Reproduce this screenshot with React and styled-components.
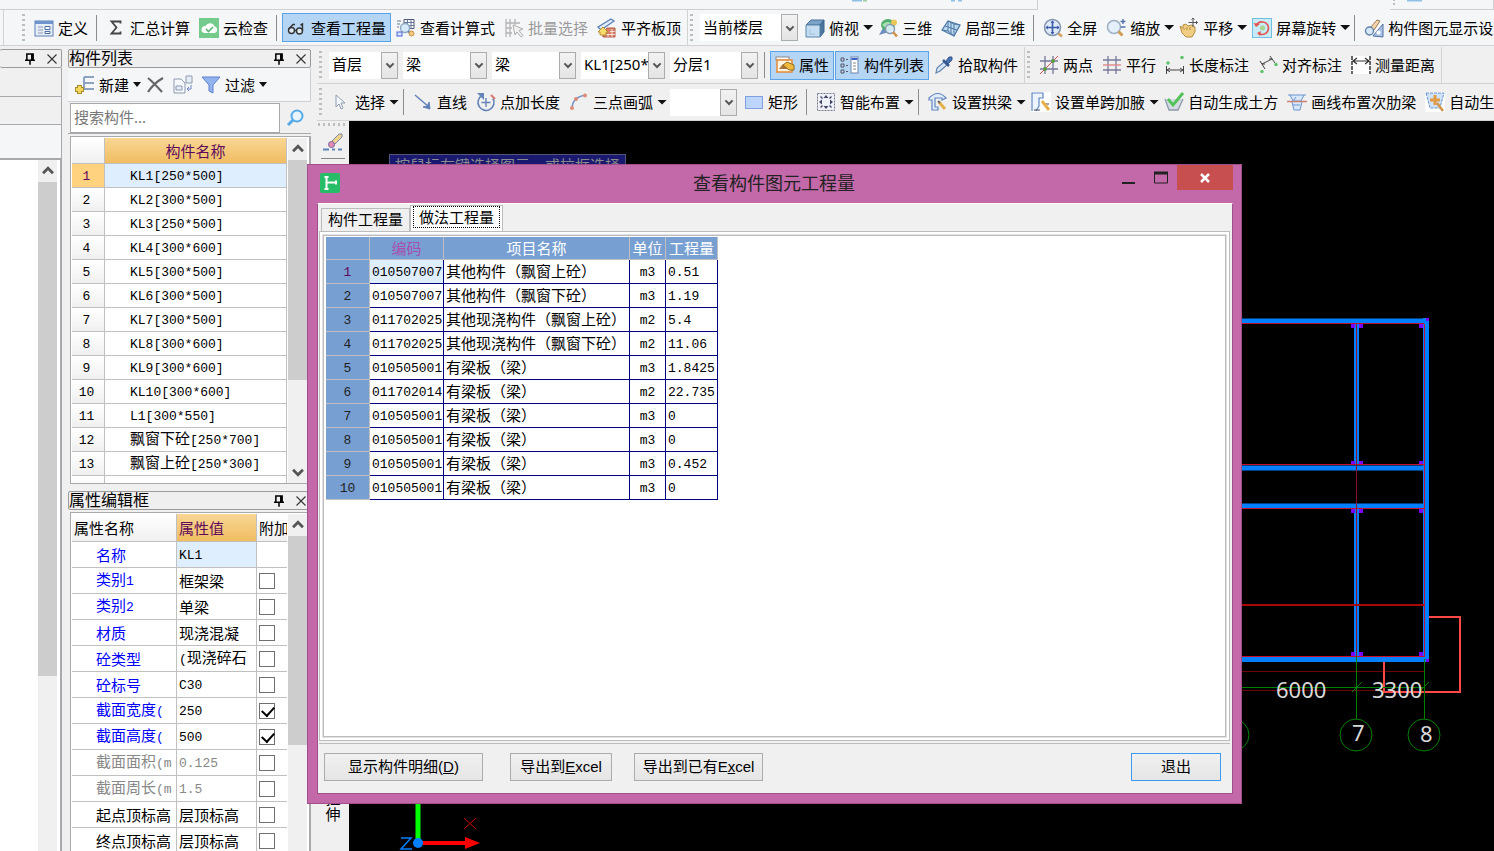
import React from 'react'
import styled, { createGlobalStyle, css } from 'styled-components'

const GlobalStyle = createGlobalStyle`
  *{
    box-sizing: border-box;
  }

  body{
    margin: 0;
    background: #f0f0f0;
    color: #000;
    font-family: "Noto Sans", "Noto Sans CJK SC", sans-serif;
    font-size: 15px;
    line-height: 20px;
  }

  button, input, select{
    font: inherit;
    color: inherit;
    margin: 0;
  }
`

const Page = styled.div`
  position: relative;
  display: flex;
  flex-direction: column;
  height: 100vh;
  overflow: hidden;
`

/* ---------- toolbars ---------- */

const TopStrip = styled.div`
  flex: none;
  display: flex;
  justify-content: space-between;
  height: 10px;
  background: #f5f6f8;
`

const StripPart = styled.div`
  width: ${p => p.$width};
  border-bottom: 1px solid #cfcfcf;
  border-right: 1px solid #cfcfcf;
`

const ToolRow = styled.div`
  flex: none;
  display: flex;
  height: ${p => (p.$light ? '36px' : '37px')};
  overflow: hidden;
  background: ${p => (p.$light ? '#f5f6f8' : '#f0f0f0')};
  border-bottom: 1px solid #d2d2d2;
`

const ToolGroup = styled.div`
  flex: none;
  display: flex;
  align-items: center;
  gap: 1px;
  padding: 0 2px;
  border-right: 1px solid #d2d2d2;
  margin-left: ${p => (p.$first ? '16px' : '0')};
`

const RowEdge = styled.div`
  flex: none;
  width: 4px;
  border-right: 1px solid #d2d2d2;
`

const Grip = styled.span`
  flex: none;
  width: 3px;
  height: 28px;
  margin-right: 4px;
  background: repeating-linear-gradient(#bdbdbd 0 2px, transparent 2px 5px);
`

const Separator = styled.span`
  flex: none;
  width: 2px;
  height: 26px;
  margin: 0 3px;
  border-left: 1px solid #8c8c8c;
`

const ToolButton = styled.button`
  flex: none;
  display: flex;
  align-items: center;
  gap: 4px;
  height: 29px;
  padding: 0 3px;
  border: 1px solid transparent;
  background: none;
  white-space: nowrap;
  color: ${p => (p.disabled ? '#9a9a9a' : '#000')};

  ${p => p.$arrow && css`
    padding-right: 0;
    border-right: 0;
  `}

  ${p => p.$active && css`
    padding: 0 4px;
    background: #b5d5f5;
    border-color: #5ba3e8;
  `}
`

const Caret = styled.span`
  width: ${p => (p.$small ? '8px' : '10px')};
  height: 5px;
  background: #111;
  clip-path: polygon(0 0, 100% 0, 50% 100%);
`

const ComboBox = styled.span`
  flex: none;
  position: relative;
  display: flex;
  width: ${p => p.$width}px;
  height: 27px;
  margin: 0 2px;

  select{
    appearance: none;
    width: 100%;
    border: 0;
    border-radius: 0;
    padding: 0 16px 2px 3px;
    background: #fff;
    overflow: hidden;
  }

  span{
    position: absolute;
    right: 0;
    top: 0;
    bottom: 0;
    width: 17px;
    display: flex;
    align-items: center;
    justify-content: center;
    border: 1px solid #acacac;
    background: linear-gradient(#f2f2f2, #e4e4e4);
    pointer-events: none;
  }
`

const Svg = styled.svg`
  flex: none;
  display: block;
`

const ICONS = {
  define: <><rect x="1" y="3" width="18" height="15" fill="#e8eef8" stroke="#5d7fb5" /><path d="M1 4.500h18" stroke="#6f93cb" strokeWidth="3" /><path d="M4 9h5M4 12h5M4 15h5" stroke="#8a9ab5" /><path d="M11 8.500h5v3h-5zM11 13.500h5v2h-5z" fill="#fff" stroke="#4c6ea5" /></>,
  sigma: <path d="M14.500 5.500V3.500H5.500L10.500 9.500L5.500 15.500H14.500V13.500" fill="none" stroke="#444" strokeWidth="1.800" />,
  cloud: <><rect width="20" height="20" y="0" fill="#74cb8b" /><path d="M5 15h10a3.300 3.300 0 0 0 .6-6.500A5 5 0 0 0 6.500 8A3.600 3.600 0 0 0 5 15z" fill="#fff" /><path d="M7 11l2.500 2.500L14 9" fill="none" stroke="#58b873" strokeWidth="1.600" /></>,
  glasses: <><circle cx="4.500" cy="12.500" r="3" fill="#dfe9f5" stroke="#333" strokeWidth="1.400" /><circle cx="12.500" cy="13" r="3" fill="#dfe9f5" stroke="#333" strokeWidth="1.400" /><path d="M1.800 11L6 6.500H8M7.500 12.500h2M15.500 13V6l-2 1" fill="none" stroke="#333" strokeWidth="1.400" /></>,
  formula: <><path d="M8 1.500h10v9H8z" fill="#fff" stroke="#557" /><path d="M8 4.500h10M8 7.500h10M11.500 1.500v9M15 1.500v9M1 3h4M1 6h3M1 9h2" stroke="#667a99" /><circle cx="9" cy="10" r="4.500" fill="#d7eafa" stroke="#8ea9c4" strokeWidth="1.400" /><rect x="1" y="14" width="5" height="4" fill="#dbe4ff" stroke="#4665d6" /><path d="M12 13l3 3" stroke="#5b84b0" strokeWidth="2" /><circle cx="15.500" cy="15.500" r="2.500" fill="#f6c983" stroke="#c9904a" /></>,
  batch: <><path d="M2 1v18M6 1v18M11 1v6M2 5h14M2 10h6M2 15h6" stroke="#b4b4b4" strokeWidth="1.300" fill="none" /><path d="M9 7l10 4-4 1.500 4 5-2 1.500-4-5-2 3z" fill="#f2f2f2" stroke="#b0b0b0" /></>,
  slab: <><path d="M1 9L14 1l3 2L4 12z" fill="#e4ecf8" stroke="#5d7fb5" strokeWidth="1.300" /><path d="M10 10h8v9H6v-4z" fill="#d98168" stroke="#b55a48" /><path d="M8 16.500h10M13 13.500h5M11 16v3M15 11v8" stroke="#fff" strokeWidth=".7" /><path d="M1 14l5-5 5 5H9v3H3v-3z" fill="#f6dc6d" stroke="#b8902f" /></>,
  cube: <><path d="M1 7l5-5h13l-4 5z" fill="#7ba3c8" stroke="#4a719a" /><path d="M15 7l4-5v12l-4 5z" fill="#4c779f" stroke="#3d648c" /><path d="M1 7h14v12H1z" fill="#c4ddf0" stroke="#5b84ab" /><path d="M5 11v5M4 16h6" stroke="#9ec4e0" /></>,
  orbit: <><path d="M1 17l5-9 5 6z" fill="#6f8fc2" /><ellipse cx="10" cy="7" rx="7" ry="6" fill="#4fae6b" /><path d="M4 7q4-5 9-2l-4 6z" fill="#a5dfb2" /><circle cx="16" cy="4.500" r="3" fill="#ecc65a" /><circle cx="12" cy="11" r="4.500" fill="#dff0fb" fillOpacity=".9" stroke="#8299b3" strokeWidth="1.400" /><path d="M15 14l4 4.500" stroke="#d3924e" strokeWidth="2.600" /></>,
  part3d: <><path d="M1 12l6-9 12 4-6 11z" fill="#bcd9ee" stroke="#4f7ba6" strokeWidth="1.300" /><path d="M4 8l12 4M7 3v10l6 5V6L7 3M10 4.500v11M1 12l6 1M19 7l-6-1" stroke="#4f7ba6" fill="none" /></>,
  full: <><circle cx="9.500" cy="9.500" r="8" fill="#dfeaf8" stroke="#8091ad" strokeWidth="1.500" /><path d="M9.500 3v13M3 9.500h13" stroke="#3c5ba9" strokeWidth="1.600" /><path d="M9.500 2.500l2 2.500h-4zM9.500 16.500l2-2.500h-4zM2.500 9.500L5 7.500v4zM16.500 9.500L14 7.500v4z" fill="#3c5ba9" /><path d="M15.500 15.500l3.500 3" stroke="#d3a15b" strokeWidth="2.600" /></>,
  zoom: <><circle cx="8" cy="9" r="6.500" fill="#e4f0fb" stroke="#9eb0c4" strokeWidth="1.500" /><path d="M12.500 13.500l4 4" stroke="#d39a52" strokeWidth="3" /><path d="M17 1v5M14.500 3.500h5M14.500 9h5" stroke="#5472ab" strokeWidth="1.400" fill="none" /></>,
  pan: <><path d="M1 8l3 2V7l3-1 2 2 4-1 3 2 0 5-3 5H7l-4-4z" fill="#f0cd82" stroke="#b68d43" /><path d="M5 10v2M8 9v3M11 9v3" stroke="#b68d43" /><path d="M14 0v9M9.500 4.500h9M12.500 1.500L14 0l1.500 1.500M17 3l1.500 1.500L17 6" stroke="#555" fill="none" /></>,
  rotate: <><rect x=".5" y=".5" width="19" height="19" fill="#c9ebf7" stroke="#70bfe0" /><path d="M4 8a6.500 6.500 0 0 1 12.500 2a6.500 6.500 0 0 1-9 6" fill="none" stroke="#e0574f" strokeWidth="1.600" /><path d="M1.500 5l2.500 4 4-3zM9 13l-4 2 3 3z" fill="#e0574f" /><circle cx="10.500" cy="10" r="2.500" fill="#a8d48e" /></>,
  display: <><path d="M6 10L13 2l3 1-6 9z" fill="#f5d6ab" stroke="#99785a" /><circle cx="5.500" cy="13" r="4" fill="#d9e8f7" stroke="#6483ab" strokeWidth="1.400" /><path d="M9 18L19 6v13z" fill="#a9c4e7" stroke="#54719f" /><circle cx="14.500" cy="14.500" r="2" fill="#fff" /></>,
  attribute: <><rect x="1" y="2" width="13" height="3" fill="#fff" stroke="#888" /><rect x="2" y="5" width="15" height="12" fill="#fff4e0" stroke="#e58a35" strokeWidth="1.500" /><path d="M4 14l4-5 5 5z" fill="#a8763c" /><path d="M8 10l4-3 7 3v5l-5 0z" fill="#f0ba3d" stroke="#8d6a24" /></>,
  list: <><path d="M1 3h3v3H1zM1 9h3v3H1zM1 15h3v3H1z" fill="none" stroke="#556" /><path d="M6 4.500h2M6 10.500h2M6 16.500h2" stroke="#556" /><rect x="11" y="2" width="7" height="16" fill="#fff" stroke="#6f85ab" /><path d="M11.500 4h6" stroke="#3d62c9" strokeWidth="2" /><path d="M13 8h3M13 11h3M13 14h3" stroke="#888" /></>,
  dropper: <><path d="M2 18l1-5 7-6 3 3-7 6z" fill="#d6e6f6" stroke="#6283ae" strokeWidth="1.200" /><path d="M9 5l6 6" stroke="#36598f" strokeWidth="2.500" /><path d="M12 6l3-4 3 0 0 3-4 4z" fill="#4672b4" stroke="#36598f" /></>,
  twoPoint: <><path d="M6 1v18M14 1v18M1 6h18M1 14h18" stroke="#77799c" strokeWidth="1.300" /><path d="M1 19L19 1" stroke="#dd5252" /><circle cx="6" cy="14" r="2" fill="#5c9c47" /><circle cx="14" cy="6" r="2" fill="#5c9c47" /></>,
  parallel: <><path d="M6 1v18M14 1v18M1 5h18M1 15h18" stroke="#77799c" strokeWidth="1.300" /><path d="M1 10h18" stroke="#e08f8f" strokeWidth="1.500" /></>,
  length: <><path d="M1.500 11v8M18.500 11v8M2 15h16M5 13l-3 2 3 2M15 13l3 2-3 2" stroke="#444" fill="none" /><circle cx="3" cy="8" r="1.800" fill="#5fc46a" /><circle cx="17" cy="2.500" r="1.800" fill="#5fc46a" /></>,
  align: <><path d="M2 6l5 8M12 1l5 7M4 9l10-5M4 9l3 0M14 4l-3 0" stroke="#444" fill="none" /><circle cx="4" cy="16.500" r="1.700" fill="#5fc46a" /><circle cx="18" cy="9.500" r="1.700" fill="#5fc46a" /></>,
  measure: <><rect y="1" width="20" height="18" fill="#fff" /><path d="M1 1v18M19 1v18" stroke="#333" strokeWidth="1.500" strokeDasharray="4 1" /><path d="M2 6h16M6 3L2 6l4 3M14 3l4 3-4 3" stroke="#333" fill="none" strokeWidth="1.200" /></>,
  pointer: <path d="M5 3v12l3-3 2 5 2-1-2-5h4z" fill="#f4f7fb" stroke="#8f9db5" />,
  line: <><path d="M2 3l14 12" stroke="#5f7fb8" strokeWidth="1.400" /><path d="M17 17l-1-7-1.500 4L10 15z" fill="#5f7fb8" stroke="#5f7fb8" /></>,
  addLength: <><path d="M6 3.500a8 8 0 1 0 11 3" fill="none" stroke="#6483b7" strokeWidth="1.600" /><path d="M1 1h7v7z" fill="#6483b7" /><path d="M10 6v9M5.500 10.500h9" stroke="#6483b7" strokeWidth="1.400" /><path d="M15 3l4 4" stroke="#d5776d" strokeWidth="2" /></>,
  arc: <><path d="M3 17Q3 5 17 3" fill="none" stroke="#6f93cb" strokeWidth="1.500" /><circle cx="3" cy="16" r="2" fill="#e08b76" /><circle cx="7" cy="7" r="2" fill="#e08b76" /><circle cx="16" cy="3.500" r="2" fill="#e08b76" /></>,
  rect: <rect x="1.500" y="4.500" width="17" height="12" fill="#bdd4fb" stroke="#7f9fe0" />,
  smart: <><rect x="1.500" y="1.500" width="17" height="17" fill="#eef2f8" stroke="#778" strokeDasharray="2 1" /><path d="M10 3l2.500 3h-5zM10 17l2.500-3h-5zM3 10l3-2.500v5zM17 10l-3-2.500v5z" fill="#446" /><path d="M4.500 4.500l2 2M15.500 4.500l-2 2M4.500 15.500l2-2M15.500 15.500l-2-2" stroke="#446" strokeWidth="1.300" /></>,
  arch: <><path d="M1 6Q10-3 18 6l-4 2v-2H7v9h3v3H4V8H1z" fill="#e4eefb" stroke="#5f86c0" strokeWidth="1.200" /><path d="M11 10l6 7" stroke="#e6b04a" strokeWidth="3" /><path d="M10 9l2 2" stroke="#666" strokeWidth="2" /></>,
  haunch: <><rect width="20" height="20" fill="#fff" /><path d="M1 19V1h11v5H8v8l-3 5" fill="#eef4fd" stroke="#5f86c0" strokeWidth="1.200" /><path d="M3 18h6M13 12h5" stroke="#445" /><path d="M11 9l7 9" stroke="#e6b04a" strokeWidth="3" /></>,
  earth: <><path d="M1 7l4 11h9l5-11" fill="#d5dae2" stroke="#8c99ab" strokeWidth="1.300" /><path d="M4 7l5 6L19 1" fill="none" stroke="#55c35b" strokeWidth="3" /></>,
  rib: <><path d="M1 3h18M3 3l3 6h8l3-6M5 10l2 8h6l2-8" fill="#d8e8fa" stroke="#6b94cd" /><path d="M0 9.500h20" stroke="#cc8070" strokeWidth="1.500" /><path d="M6 13h7M9 5l-3 4" stroke="#6b94cd" /></>,
  autoRib: <><rect width="20" height="20" fill="#fff" /><path d="M1 1h18l-4 15H5z" fill="#cfe2f8" stroke="#6b94cd" strokeDasharray="3 1" /><path d="M10 3v10M5 8h10" stroke="#e39a45" strokeWidth="3" /><path d="M12 11l6 8" stroke="#d49448" strokeWidth="2.500" /></>,
  create: <><path d="M9 2h10M9 8h10M9 14h10M9 2v12" stroke="#8ca2c0" strokeWidth="2" fill="none" /><path d="M4.500 10v9M0 14.500h9" stroke="#a88a2f" strokeWidth="5" /><path d="M4.500 11v7M1 14.500h7" stroke="#f3d75c" strokeWidth="3" /></>,
  remove: <path d="M3 3Q8 7 17 17M18 3Q9 8 3 17" fill="none" stroke="#666" strokeWidth="2.200" />,
  copy: <><path d="M1 4h7l4 4v10H1z" fill="#f5f8fc" stroke="#8c9ab0" /><path d="M3 11h6v4H3zM13 1h6v7h-6z" fill="#e6edf7" stroke="#8c9ab0" /><path d="M18 10v4h-4M16 12l-2 2 2 2" fill="none" stroke="#6a83c8" /></>,
  filter: <path d="M1 2h18l-7 8v8l-4-2v-6z" fill="#93b4ee" stroke="#5c81cc" />,
  search: <><circle cx="11" cy="8" r="5.500" fill="#e8f5fe" stroke="#55aae8" strokeWidth="2" /><path d="M7 12L2 17" stroke="#55aae8" strokeWidth="3" /></>,
  brush: <><path d="M8 10l8-8 3 0 0 3-8 8z" fill="#f0d48c" stroke="#7a86a5" /><circle cx="8.500" cy="12.500" r="3" fill="#e58cb4" stroke="#75689a" /><path d="M0 17.500h6M9 17.500h3M15 17.500h4" stroke="#5d86b4" strokeWidth="2" /></>,
  chevronDown: <path d="M5.500 8l4.500 4.500L14.500 8" fill="none" stroke="#555" strokeWidth="2.500" />,
  chevronUp: <path d="M5.500 12L10 7.500l4.500 4.500" fill="none" stroke="#555" strokeWidth="2.500" />,
  pin: <path d="M6.500 11V4.500h7V11M12 5v6M4.500 11.500h11M10 12v4.500" fill="none" stroke="#000" strokeWidth="1.700" />,
  close: <path d="M5 5l10 10M15 5L5 15" stroke="#333" strokeWidth="1.200" />,
  app: <><rect width="20" height="20" rx="2" fill="#27bd68" /><path d="M6.500 4v12M7 9.500h9M4.500 4h4M4.500 16h4M16 7.500v4" stroke="#fff" strokeWidth="2" /></>
}

const Icon = ({ name, size = 20 }) => (
  <Svg width={size} height={size} viewBox="0 0 20 20" aria-hidden="true">{ICONS[name]}</Svg>
)

const Tool = ({ icon, label, arrow, ...rest }) => (
  <ToolButton type="button" $arrow={arrow} {...rest}>
    <Icon name={icon} />
    {label}
    {arrow && <Caret />}
  </ToolButton>
)

const Combo = ({ width, value, label }) => (
  <ComboBox $width={width}>
    <select aria-label={label} defaultValue={value}>
      <option>{value}</option>
    </select>
    <span><Icon name="chevronDown" size={16} /></span>
  </ComboBox>
)

/* ---------- docked panels ---------- */

const Body = styled.div`
  flex: 1;
  display: flex;
  min-height: 0;
  padding-top: 1px;
`

const SideColumn = styled.div`
  flex: none;
  display: flex;
  flex-direction: column;
  width: ${p => p.$width}px;
  margin-right: 6px;
  padding-top: 2px;
`

const PanelTitle = styled.header`
  flex: none;
  display: flex;
  align-items: center;
  height: 19px;
  border: 1px solid #9b9b9b;
  border-left-width: ${p => (p.$cut ? '0' : '1px')};
  border-radius: 2px;
  background: #efefef;
  font-size: 16px;
  line-height: 17px;

  h2{
    flex: 1;
    margin: 0;
    font-size: inherit;
    font-weight: normal;
    white-space: nowrap;
  }

  button{
    display: flex;
    padding: 0;
    border: 0;
    background: none;
    margin-left: 4px;
  }
`

const EmptyBar = styled.div`
  flex: none;
  height: ${p => p.$height}px;
  border: 1px solid #a9a9ad;
  border-left: 0;
  border-top: 0;
  background: ${p => (p.$light ? '#f5f6f8' : '#f0f0f0')};
`

const Frame = styled.div`
  flex: 1;
  display: flex;
  min-height: 0;
  overflow: hidden;
  background: #fff;
  border: 1px solid #a9a9ad;
  border-right: 2px solid #a9a9ad;
  border-bottom-width: ${p => (p.$open ? '0' : '1px')};
  border-left-width: ${p => (p.$cut ? '0' : '1px')};
  margin: ${p => (p.$cut ? '0' : '2px 0 0 2px')};
  padding: ${p => (p.$cut ? '0 3px 0 0' : '1px 2px 0 1px')};
`

const FrameContent = styled.div`
  flex: 1;
  min-width: 0;
  margin-right: 1px;
  overflow: hidden;
`

const Scroll = styled.div`
  flex: none;
  display: flex;
  flex-direction: column;
  align-items: center;
  width: 19px;
  background: #f0f0f0;
`

const Thumb = styled.span`
  width: 100%;
  flex: 0 1 ${p => p.$size};
  margin-bottom: auto;
  background: #cdcdcd;
`

const PanelTools = styled.div`
  flex: none;
  display: flex;
  align-items: center;
  height: 34px;
  padding-left: 3px;
  background: #f5f6f8;
  border-bottom: 1px solid #cfcfcf;
  border-right: 1px solid #cfcfcf;
`

const SearchRow = styled.label`
  flex: none;
  display: flex;
  align-items: center;
  gap: 6px;
  height: 32px;
  padding-left: 2px;
  border-bottom: 1px solid #a9a9ad;

  input{
    width: 210px;
    height: 30px;
    padding: 0 3px 2px;
    border: 1px solid #a9a9ad;
    border-radius: 0;
    background: #fff;
  }

  input::placeholder{
    color: #777;
  }
`

const Panel = styled.section`
  display: flex;
  flex-direction: column;
  min-height: 0;
  flex: ${p => p.$flex};
  margin-bottom: ${p => p.$space || 0}px;
`

const Mono = styled.span`
  font-family: "Liberation Mono", monospace;
  font-size: 13px;
`

// Latin runs are set in the fixed-width face, the rest stays in the CJK one
const mixed = text => text.split(/([\x20-\x7e]+)/).map((part, i) => (
  i % 2 ? <Mono key={i}>{part}</Mono> : part
))

const ListTable = styled.table`
  width: 100%;
  table-layout: fixed;
  border-collapse: separate;
  border-spacing: 0;

  th, td{
    height: 24px;
    padding: 0;
    border-right: 1px solid #c0c0c0;
    border-bottom: 1px solid #c0c0c0;
    font-weight: normal;
    white-space: nowrap;
    overflow: hidden;
  }

  thead th{
    height: 26px;
    background: linear-gradient(#fff, #f0f0f0);
  }

  thead th:last-child{
    background: linear-gradient(#f9d694, #f0bd62);
    color: #5d0a5d;
  }

  tbody th{
    background: linear-gradient(#fff, #f0f0f0);
    padding-right: 3px;
  }

  td{
    padding-left: 25px;
  }
`

const ListRow = styled.tr`
  ${p => p.$selected && css`
    && th{
      background: #ffd27f;
      color: #5d0a5d;
    }

    td{
      background: #dfeefe;
    }
  `}
`

const PropTable = styled.table`
  width: 100%;
  table-layout: fixed;
  border-collapse: separate;
  border-spacing: 0;

  th, td{
    height: 26px;
    padding: 0 0 0 2px;
    border-right: 1px solid #c0c0c0;
    border-bottom: 1px solid #c0c0c0;
    font-weight: normal;
    text-align: left;
    white-space: nowrap;
    overflow: hidden;
  }

  th:last-child, td:last-child{
    border-right: 0;
  }

  thead th{
    height: 28px;
    background: linear-gradient(#fff, #f0f0f0);
  }

  thead th:nth-child(2){
    background: linear-gradient(#f9d694, #f0bd62);
    color: #5d0a5d;
  }

  tbody th{
    padding-left: 24px;
  }
`

const PropRow = styled.tr`
  color: ${p => (p.$tone === 'grey' ? '#888' : '#000')};

  th{
    color: ${p => (p.$tone === 'blue' ? '#0000ff' : 'inherit')};
  }

  td:nth-child(2){
    background: ${p => (p.$selected ? '#dfeefe' : '#fff')};
  }
`

const Check = styled.input`
  appearance: none;
  display: block;
  width: 16px;
  height: 16px;
  border: 1px solid #707070;
  background: #fff;

  &:checked::after{
    content: '';
    display: block;
    width: 6px;
    height: 10px;
    margin: 0 0 0 4px;
    border: solid #000;
    border-width: 0 2px 2px 0;
    transform: rotate(42deg);
  }
`

/* ---------- drawing area ---------- */

const Main = styled.main`
  flex: 1;
  min-width: 0;
  display: flex;
  flex-direction: column;
`

const Workspace = styled.div`
  flex: 1;
  display: flex;
  min-height: 0;
`

const ToolStrip = styled.div`
  flex: none;
  display: flex;
  flex-direction: column;
  align-items: center;
  gap: 6px;
  width: 32px;
  padding: 2px 0 29px;

  button{
    padding: 0;
    border: 0;
    background: none;
    width: 20px;
  }

  button:last-child{
    width: 15px;
    margin-top: auto;
    line-height: 16px;
  }
`

const StripGrip = styled.span`
  width: 30px;
  height: 3px;
  background: repeating-linear-gradient(90deg, #bdbdbd 0 2px, transparent 2px 5px);
`

const StripLine = styled.span`
  width: 24px;
  border-top: 1px solid #888;
`

const Canvas = styled.div`
  position: relative;
  flex: 1;
  background: #000;
  overflow: hidden;
`

const Hint = styled.div`
  position: absolute;
  left: 40px;
  top: 33px;
  padding: 0 5px;
  border: 1px solid #55557a;
  background: #191970;
  color: #8b8b8b;
  white-space: nowrap;
`

const Model = () => (
  <Svg width="100%" height="100%" role="img" aria-label="梁平面图">
    <g stroke="#0080ff" strokeWidth="5" fill="none">
      <path d="M600 200H1080M600 347H1074M600 385H1074M600 538.500H1080" />
      <path d="M1007.500 203V344M1007.500 388V536" />
      <path d="M1077 197V541" strokeWidth="6" />
    </g>
    <g fill="#7a00ff">
      {[[1003, 203], [1011, 203], [1071, 203], [1003, 340], [1011, 340], [1071, 340], [1003, 388], [1011, 388], [1071, 388], [1003, 531], [1011, 531], [1071, 531]].map(([x, y]) => (
        <rect key={`${x}-${y}`} x={x - 1} y={y} width="4" height="4" />
      ))}
      <rect x="1077" y="197" width="3" height="3" />
      <rect x="1077" y="538" width="3" height="3" />
    </g>
    <g stroke="#c4102a" fill="none">
      <path d="M600 202.500H1075M600 343.500H1075M600 387.500H1075M600 535.500H1075M1075.500 203V536" />
      <path d="M600 484H1075" stroke="#a80808" strokeWidth="2" />
      <path d="M1007.500 203V536" stroke="#8c1030" />
      <path d="M600 550.500H1075M600 569.500H1035" stroke="#6a0505" />
    </g>
    <path d="M1080 496H1111V571H1035V541" fill="none" stroke="#ff4848" strokeWidth="2" />
    <g stroke="#008000" fill="none">
      <path d="M600 566.500H1076M1007.500 536V598M1075.500 538V598M1003 571L1013 561M1070 571L1080 561" />
      {[884, 1007, 1075].map(x => <circle key={x} cx={x} cy="614" r="16" />)}
    </g>
    <g fill="#d9d9d9" fontSize="22">
      <text x="927" y="577">6000</text>
      <text x="1023" y="577">3300</text>
      <text x="1003" y="620">7</text>
      <text x="1071" y="621">8</text>
    </g>
    <path d="M69 660V722" stroke="#00ff00" strokeWidth="5" />
    <path d="M69 722H118" stroke="#ff0000" strokeWidth="4" />
    <path d="M116 716L131 722L116 728z" fill="#ff0000" />
    <path d="M115 697L127 708M127 697L115 708" stroke="#d00000" />
    <path d="M52 717H62L52 728H63" stroke="#0080ff" strokeWidth="1.500" fill="none" />
    <circle cx="69" cy="722" r="5" fill="#0080ff" />
  </Svg>
)

/* ---------- quantity dialog ---------- */

const Dialog = styled.section`
  position: absolute;
  left: 307px;
  right: 252px;
  top: 164px;
  bottom: 47px;
  display: flex;
  flex-direction: column;
  padding: 0 8px 9px 9px;
  background: #c368a8;
  border: 1px solid #a05088;
`

const DialogTitle = styled.header`
  flex: none;
  display: flex;
  align-items: flex-start;
  height: 38px;
  padding-left: 3px;

  > svg{
    margin-top: 8px;
  }

  h1{
    flex: 1;
    margin: 6px 0 0 95px;
    font-size: 18px;
    font-weight: normal;
    line-height: 24px;
    text-align: center;
    color: #222;
  }
`

const WindowButton = styled.button`
  display: flex;
  align-items: center;
  justify-content: center;
  width: ${p => (p.$close ? '56px' : '32px')};
  height: 25px;
  padding: 0;
  border: 0;
  background: ${p => (p.$close ? '#c84f50' : 'none')};
`

const Client = styled.div`
  flex: 1;
  display: flex;
  flex-direction: column;
  min-height: 0;
  background: #f0f0f0;
  border: 1px solid #a05088;
  border-top-color: #fff;
  padding: 1px 2px 0 1px;
`

const Tabs = styled.div`
  flex: none;
  display: flex;
  align-items: flex-end;
  height: 26px;
  padding-left: 2px;
`

const Tab = styled.button`
  height: ${p => (p.$active ? '27px' : '23px')};
  padding: ${p => (p.$active ? '0 2px 4px' : '0 6px 2px')};
  margin-bottom: ${p => (p.$active ? '-1px' : '0')};
  border: 1px solid #bcbcbc;
  border-bottom: 0;
  background: ${p => (p.$active ? '#fff' : '#f0f0f0')};

  span{
    display: block;
    padding: ${p => (p.$active ? '0 5px' : '0')};
    border: ${p => (p.$active ? '1px dotted #000' : '0')};
  }
`

const TabPage = styled.div`
  flex: 1;
  min-height: 0;
  display: flex;
  padding: 3px;
  background: #fff;
  border: 1px solid #bcbcbc;
`

const Sheet = styled.div`
  flex: 1;
  padding: 1px 2px;
  border: 1px solid #bcbcbc;
  outline: 1px solid #e0e0e6;
  overflow: hidden;
`

const DataTable = styled.table`
  width: 392px;
  table-layout: fixed;
  border-collapse: separate;
  border-spacing: 0;
  line-height: 18px;

  th, td{
    height: 24px;
    padding: 0 0 1px 2px;
    font-weight: normal;
    white-space: nowrap;
    overflow: hidden;
  }

  th{
    padding: 0;
    background: #789fd1;
    color: #fff;
    border-right: 1px solid #c0c0c0;
    border-bottom: 1px solid #c0c0c0;
  }

  thead th{
    height: 23px;
  }

  thead th:nth-child(2){
    color: #a64fb0;
  }

  tbody th{
    color: #222;
  }

  tbody tr:first-child th{
    color: #5d0a5d;
  }

  td{
    border-right: 1px solid #000080;
    border-bottom: 1px solid #000080;
  }

  tbody tr:first-child td:nth-child(2){
    background: #dfeefe;
  }

  td:nth-child(4){
    text-align: center;
    padding: 0 0 1px;
  }
`

const Actions = styled.footer`
  flex: none;
  display: flex;
  align-items: flex-start;
  height: 50px;
  margin-top: 2px;
  padding: 9px 9px 0 5px;
  border-top: 1px solid #bcbcbc;
`

const ActionButton = styled.button`
  width: ${p => p.$width}px;
  height: 28px;
  padding: 0;
  margin-right: ${p => p.$space || 0}px;
  margin-left: ${p => (p.$primary ? 'auto' : '0')};
  border: 1px solid ${p => (p.$primary ? '#3c9bf0' : '#acacac')};
  background: linear-gradient(#f0f0f0, #e5e5e5);
  font-family: "Liberation Sans", "Noto Sans CJK SC", sans-serif;
`

/* ---------- data ---------- */

const components = [
  'KL1[250*500]', 'KL2[300*500]', 'KL3[250*500]', 'KL4[300*600]', 'KL5[300*500]',
  'KL6[300*500]', 'KL7[300*500]', 'KL8[300*600]', 'KL9[300*600]', 'KL10[300*600]',
  'L1[300*550]', '飘窗下砼[250*700]', '飘窗上砼[250*300]'
]

const properties = [
  { name: '名称', value: 'KL1', tone: 'blue' },
  { name: '类别1', value: '框架梁', tone: 'blue', check: false },
  { name: '类别2', value: '单梁', tone: 'blue', check: false },
  { name: '材质', value: '现浇混凝', tone: 'blue', check: false },
  { name: '砼类型', value: '(现浇碎石', tone: 'blue', check: false },
  { name: '砼标号', value: 'C30', tone: 'blue', check: false },
  { name: '截面宽度(', value: '250', tone: 'blue', check: true },
  { name: '截面高度(', value: '500', tone: 'blue', check: true },
  { name: '截面面积(m', value: '0.125', tone: 'grey', check: false },
  { name: '截面周长(m', value: '1.5', tone: 'grey', check: false },
  { name: '起点顶标高', value: '层顶标高', check: false },
  { name: '终点顶标高', value: '层顶标高', check: false }
]

const quantities = [
  ['010507007', '其他构件（飘窗上砼）', 'm3', '0.51'],
  ['010507007', '其他构件（飘窗下砼）', 'm3', '1.19'],
  ['011702025', '其他现浇构件（飘窗上砼）', 'm2', '5.4'],
  ['011702025', '其他现浇构件（飘窗下砼）', 'm2', '11.06'],
  ['010505001', '有梁板（梁）', 'm3', '1.8425'],
  ['011702014', '有梁板（梁）', 'm2', '22.735'],
  ['010505001', '有梁板（梁）', 'm3', '0'],
  ['010505001', '有梁板（梁）', 'm3', '0'],
  ['010505001', '有梁板（梁）', 'm3', '0.452'],
  ['010505001', '有梁板（梁）', 'm3', '0']
]

const TitleButtons = () => (
  <>
    <button type="button" aria-label="固定"><Icon name="pin" size={18} /></button>
    <button type="button" aria-label="关闭"><Icon name="close" size={18} /></button>
  </>
)

const ScrollBar = ({ size, open }) => (
  <Scroll>
    <Icon name="chevronUp" size={22} />
    <Thumb $size={size} />
    {!open && <Icon name="chevronDown" size={22} />}
  </Scroll>
)

const ComponentList = () => (
  <Panel $flex="0 1 435px" $space={7}>
    <PanelTitle><h2>构件列表</h2><TitleButtons /></PanelTitle>
    <PanelTools>
      <ToolButton type="button" $arrow><Icon name="create" />新建<Caret $small /></ToolButton>
      <ToolButton type="button" aria-label="删除"><Icon name="remove" /></ToolButton>
      <ToolButton type="button" aria-label="复制"><Icon name="copy" /></ToolButton>
      <ToolButton type="button" $arrow><Icon name="filter" />过滤<Caret $small /></ToolButton>
    </PanelTools>
    <SearchRow>
      <input type="text" placeholder="搜索构件..." aria-label="搜索构件" />
      <Icon name="search" />
    </SearchRow>
    <Frame>
      <FrameContent>
        <ListTable>
          <colgroup><col width="33" /><col /></colgroup>
          <thead><tr><th /><th>构件名称</th></tr></thead>
          <tbody>
            {components.map((name, i) => (
              <ListRow key={name} $selected={i === 0}>
                <th><Mono>{i + 1}</Mono></th>
                <td>{mixed(name)}</td>
              </ListRow>
            ))}
            <ListRow><th /><td /></ListRow>
          </tbody>
        </ListTable>
      </FrameContent>
      <ScrollBar size="220px" />
    </Frame>
  </Panel>
)

const PropertyEditor = () => (
  <Panel $flex="1">
    <PanelTitle><h2>属性编辑框</h2><TitleButtons /></PanelTitle>
    <Frame $open>
      <FrameContent>
        <PropTable>
          <colgroup><col width="105" /><col width="80" /><col /></colgroup>
          <thead><tr><th>属性名称</th><th>属性值</th><th>附加</th></tr></thead>
          <tbody>
            {properties.map((p, i) => (
              <PropRow key={p.name} $tone={p.tone} $selected={i === 0}>
                <th>{mixed(p.name)}</th>
                <td>{mixed(p.value)}</td>
                <td>
                  {p.check !== undefined && <Check type="checkbox" aria-label={p.name} defaultChecked={p.check} />}
                </td>
              </PropRow>
            ))}
          </tbody>
        </PropTable>
      </FrameContent>
      <ScrollBar size="209px" open />
    </Frame>
  </Panel>
)

const QuantityDialog = () => (
  <Dialog role="dialog" aria-labelledby="dialog-title">
    <DialogTitle>
      <Icon name="app" />
      <h1 id="dialog-title">查看构件图元工程量</h1>
      <WindowButton type="button" aria-label="最小化">
        <Svg width="16" height="16"><path d="M1 13h13" stroke="#222" strokeWidth="2" /></Svg>
      </WindowButton>
      <WindowButton type="button" aria-label="最大化">
        <Svg width="16" height="16"><path d="M1.500 2v11h13V2" fill="none" stroke="#222" /><path d="M1 3h14" stroke="#222" strokeWidth="3" /></Svg>
      </WindowButton>
      <WindowButton type="button" aria-label="关闭" $close>
        <Svg width="12" height="12"><path d="M2 2l8 8M10 2l-8 8" stroke="#fff" strokeWidth="2.500" /></Svg>
      </WindowButton>
    </DialogTitle>
    <Client>
      <Tabs role="tablist">
        <Tab type="button" role="tab"><span>构件工程量</span></Tab>
        <Tab type="button" role="tab" aria-selected="true" $active><span>做法工程量</span></Tab>
      </Tabs>
      <TabPage>
        <Sheet>
          <DataTable>
            <colgroup><col width="44" /><col width="74" /><col width="186" /><col width="36" /><col width="52" /></colgroup>
            <thead>
              <tr><th /><th>编码</th><th>项目名称</th><th>单位</th><th>工程量</th></tr>
            </thead>
            <tbody>
              {quantities.map((row, i) => (
                <tr key={i}>
                  <th><Mono>{i + 1}</Mono></th>
                  {row.map((cell, j) => <td key={j}>{mixed(cell)}</td>)}
                </tr>
              ))}
            </tbody>
          </DataTable>
        </Sheet>
      </TabPage>
      <Actions>
        <ActionButton type="button" $width={159} $space={27}>显示构件明细(<u>D</u>)</ActionButton>
        <ActionButton type="button" $width={102} $space={22}>导出到<u>E</u>xcel</ActionButton>
        <ActionButton type="button" $width={129}>导出到已有E<u>x</u>cel</ActionButton>
        <ActionButton type="button" $width={90} $primary>退出</ActionButton>
      </Actions>
    </Client>
  </Dialog>
)

const App = () => (
  <Page>
    <GlobalStyle />
    <TopStrip>
      <StripPart $width="1038px">
        <Svg width="100%" height="3" aria-hidden="true"><path d="M852 0h10M951 0h4M958 0h4" stroke="#8fc0e6" strokeWidth="3" /><path d="M863 0h4" stroke="#9fcf9f" strokeWidth="3" /></Svg>
      </StripPart>
      <StripPart $width="104px">
        <Svg width="100%" height="6" aria-hidden="true"><path d="M3 0h2M3 4h2" stroke="#bdbdbd" strokeWidth="2" /><path d="M17 0h15" stroke="#8fc0e6" strokeWidth="3" /></Svg>
      </StripPart>
    </TopStrip>
    <ToolRow $light>
      <RowEdge />
      <ToolGroup $first>
        <Grip />
        <Tool icon="define" label="定义" />
        <Separator />
        <Tool icon="sigma" label="汇总计算" />
        <Tool icon="cloud" label="云检查" />
        <Separator />
        <Tool icon="glasses" label="查看工程量" $active />
        <Tool icon="formula" label="查看计算式" />
        <Tool icon="batch" label="批量选择" disabled />
        <Tool icon="slab" label="平齐板顶" />
      </ToolGroup>
      <ToolGroup>
        <Grip />
        <Combo width={98} value="当前楼层" label="楼层范围" />
        <Tool icon="cube" label="俯视" arrow />
        <Tool icon="orbit" label="三维" />
        <Tool icon="part3d" label="局部三维" />
        <Separator />
        <Tool icon="full" label="全屏" />
        <Tool icon="zoom" label="缩放" arrow />
        <Tool icon="pan" label="平移" arrow />
        <Tool icon="rotate" label="屏幕旋转" arrow />
        <Separator />
        <Tool icon="display" label="构件图元显示设置" />
      </ToolGroup>
    </ToolRow>
    <Body>
      <SideColumn $width={62}>
        <PanelTitle $cut><h2> </h2><TitleButtons /></PanelTitle>
        <EmptyBar $height={29} />
        <EmptyBar $height={28} />
        <EmptyBar $height={34} $light />
        <Frame $cut $open>
          <FrameContent />
          <ScrollBar size="494px" open />
        </Frame>
      </SideColumn>
      <SideColumn $width={243}>
        <ComponentList />
        <PropertyEditor />
      </SideColumn>
      <Main>
        <ToolRow>
          <ToolGroup>
            <Grip />
            <Combo width={69} value="首层" label="楼层" />
            <Combo width={84} value="梁" label="构件类别" />
            <Combo width={84} value="梁" label="构件类型" />
            <Combo width={84} value="KL1[250*" label="构件" />
            <Combo width={88} value="分层1" label="分层" />
            <Separator />
            <Tool icon="attribute" label="属性" $active />
            <Tool icon="list" label="构件列表" $active />
            <Tool icon="dropper" label="拾取构件" />
          </ToolGroup>
          <ToolGroup>
            <Grip />
            <Tool icon="twoPoint" label="两点" />
            <Tool icon="parallel" label="平行" />
            <Tool icon="length" label="长度标注" />
            <Tool icon="align" label="对齐标注" />
            <Tool icon="measure" label="测量距离" />
          </ToolGroup>
        </ToolRow>
        <ToolRow>
          <ToolGroup>
            <Grip />
            <Tool icon="pointer" label="选择" arrow />
            <Separator />
            <Tool icon="line" label="直线" />
            <Tool icon="addLength" label="点加长度" />
            <Tool icon="arc" label="三点画弧" arrow />
            <Combo width={67} value="" label="画弧方式" />
            <Tool icon="rect" label="矩形" />
            <Separator />
            <Tool icon="smart" label="智能布置" arrow />
            <Separator />
            <Tool icon="arch" label="设置拱梁" arrow />
            <Tool icon="haunch" label="设置单跨加腋" arrow />
            <Tool icon="earth" label="自动生成土方" />
            <Tool icon="rib" label="画线布置次肋梁" />
            <Tool icon="autoRib" label="自动生成次肋梁" />
          </ToolGroup>
        </ToolRow>
        <Workspace>
          <ToolStrip>
            <StripGrip />
            <button type="button" aria-label="格式刷"><Icon name="brush" /></button>
            <StripLine />
            <button type="button">拉伸</button>
          </ToolStrip>
          <Canvas>
            <Model />
            <Hint>按鼠标左键选择图元，或拉框选择</Hint>
          </Canvas>
        </Workspace>
      </Main>
    </Body>
    <QuantityDialog />
  </Page>
)

export default App
